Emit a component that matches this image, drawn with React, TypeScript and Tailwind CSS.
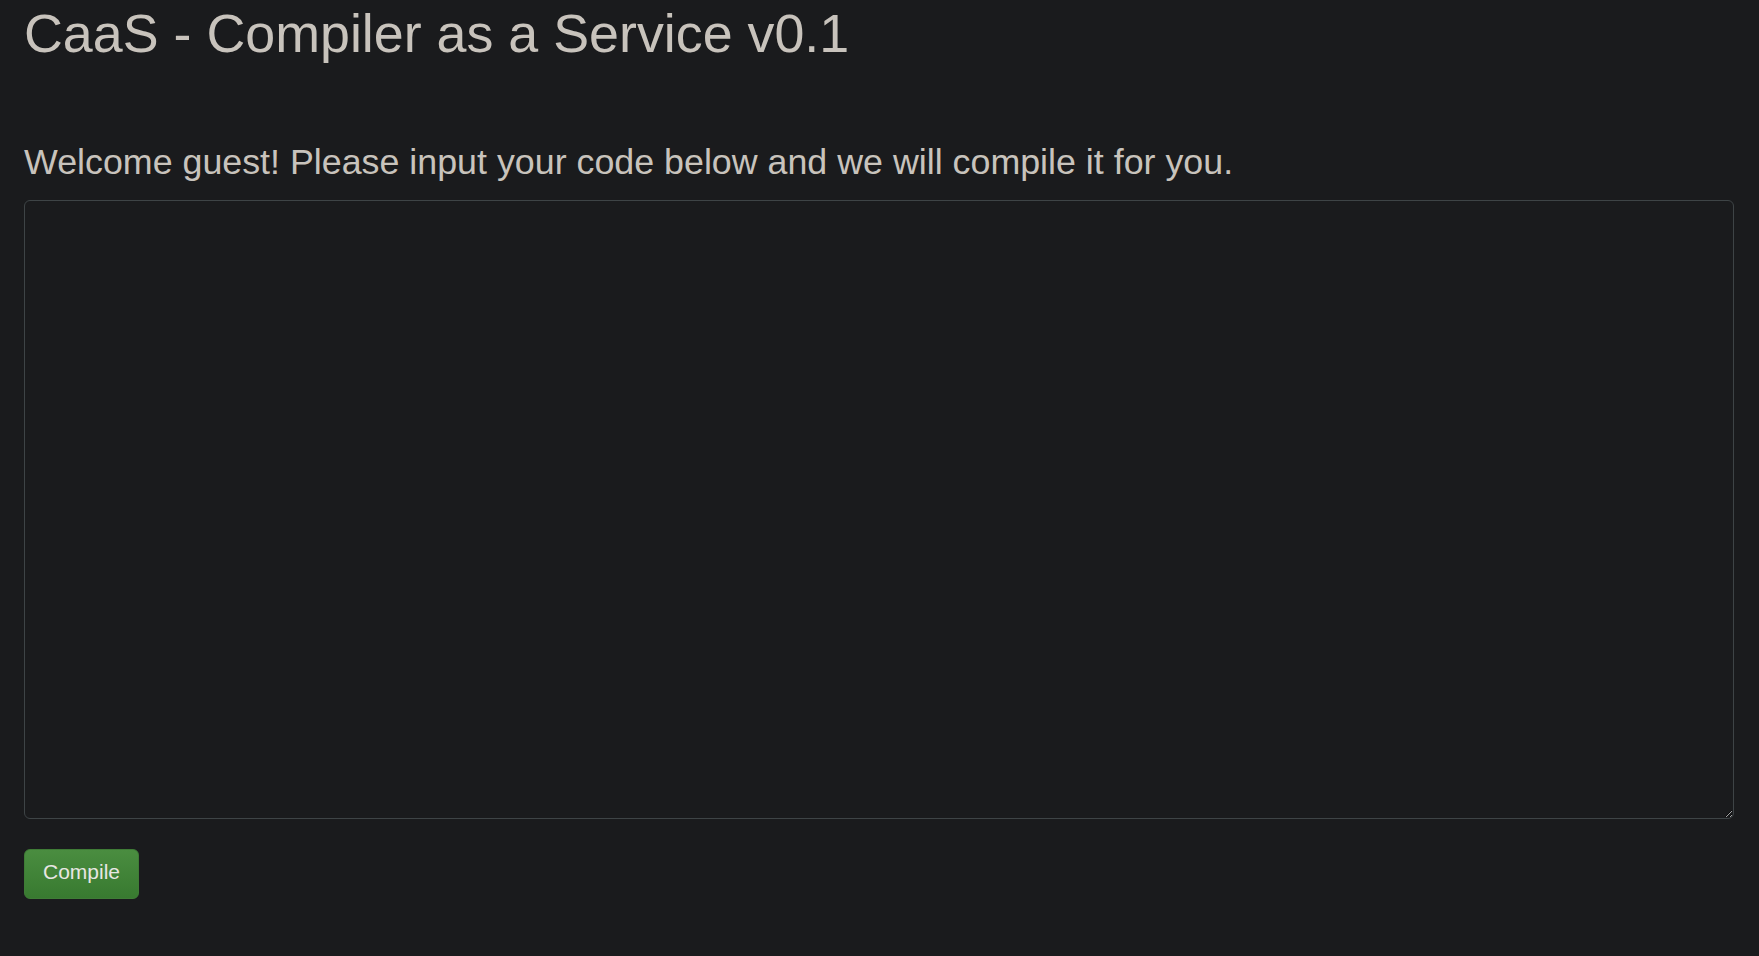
export default function App() {
  return (
    <div
      className="h-[956px] w-full overflow-hidden bg-[#1a1b1d] text-[#c8c3bc]"
      style={{ fontFamily: '"Liberation Sans", Arial, sans-serif' }}
    >
      <div className="pl-[24px] pr-[25px] pt-[4px]">
        <h1 className="text-[53.8px] leading-[1.1] font-normal">CaaS - Compiler as a Service v0.1</h1>
        <h3 className="mt-[80px] text-[35.8px] leading-[1.1] font-normal">
          Welcome guest! Please input your code below and we will compile it for you.
        </h3>
        <textarea
          className="mt-[17px] block h-[619px] w-full rounded-[6px] border border-[#3e4446] bg-[#1a1b1d] text-[#c8c3bc] outline-none"
          style={{ resize: "both" }}
        />
        <button
          className="mt-[30px] block h-[50px] w-[115px] rounded-[6px] border border-[#3f7c36] bg-gradient-to-b from-[#4a8d40] to-[#387a30] pb-[4px] text-[21px] leading-[30px] text-[#e8e6e3]"
        >
          Compile
        </button>
      </div>
    </div>
  );
}
